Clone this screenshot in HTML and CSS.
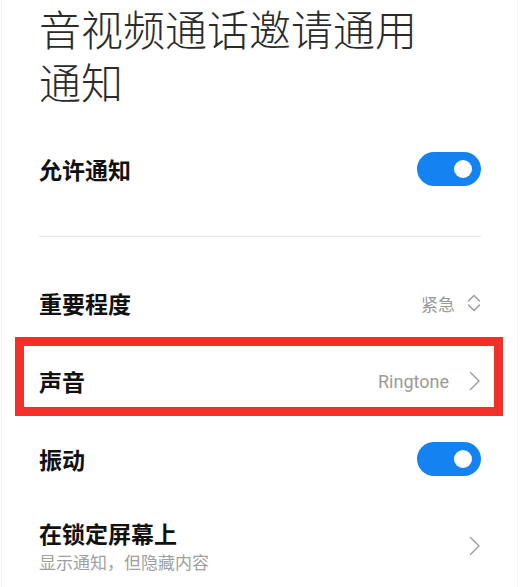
FILE: index.html
```html
<!DOCTYPE html>
<html lang="zh-CN">
<head>
    <meta charset="UTF-8">
    <meta name="viewport" content="width=device-width, initial-scale=1.0">
    <title>音视频通话邀请通用通知</title>
    <link rel="stylesheet" href="styles.css">
</head>
<body>
    <div class="page">
        <h1 class="page-title">音视频通话邀请通用<br>通知</h1>

        <div class="row">
            <span class="row-label">允许通知</span>
            <span class="switch on"><span class="knob"></span></span>
        </div>

        <div class="divider"></div>

        <div class="row">
            <span class="row-label">重要程度</span>
            <span class="row-value">
                紧急
                <svg class="updown" width="14" height="18" viewBox="0 0 14 18">
                    <polyline points="1.5,7 7,1.5 12.5,7" />
                    <polyline points="1.5,11 7,16.5 12.5,11" />
                </svg>
            </span>
        </div>

        <div class="row highlight">
            <span class="row-label">声音</span>
            <span class="row-value">
                <span class="latin">Ringtone</span>
                <svg class="chevron" width="12" height="20" viewBox="0 0 12 20">
                    <polyline points="1.5,1.5 10,10 1.5,18.5" />
                </svg>
            </span>
        </div>

        <div class="row">
            <span class="row-label">振动</span>
            <span class="switch on"><span class="knob"></span></span>
        </div>

        <div class="row tall">
            <div class="row-text">
                <span class="row-label">在锁定屏幕上</span>
                <span class="row-sub">显示通知，但隐藏内容</span>
            </div>
            <span class="row-value">
                <svg class="chevron" width="12" height="20" viewBox="0 0 12 20">
                    <polyline points="1.5,1.5 10,10 1.5,18.5" />
                </svg>
            </span>
        </div>
    </div>
</body>
</html>
```

FILE: styles.css
```css
* {
    box-sizing: border-box;
    margin: 0;
    padding: 0;
}

body {
    background: white;
    color: #111;
    font-family: "Noto Sans CJK SC", "Noto Sans", sans-serif;
}

.page {
    margin: 0 2px 0 1px;
    min-height: 587px;
    padding: 0 36px 0 37px;
    border-left: 1px solid #f3f3f3;
    border-right: 1px solid #f3f3f3;
}

.page-title {
    font-size: 42px;
    line-height: 53px;
    font-weight: 300;
    color: #2b2b2b;
    padding-top: 1px;
    margin-bottom: 23px;
    white-space: nowrap;
}

.row {
    height: 78px;
    display: flex;
    align-items: center;
    justify-content: space-between;
}

.row.tall {
    height: 96px;
}

.row-text {
    display: flex;
    flex-direction: column;
}

.row-label {
    font-size: 23px;
    font-weight: 700;
    color: #111;
    line-height: 30px;
}

.row-sub {
    font-size: 17px;
    color: #a0a0a0;
    line-height: 24px;
    margin-top: 2px;
}

.row-value {
    display: flex;
    align-items: center;
    gap: 12px;
    font-size: 17px;
    color: #9a9a9a;
}

.latin {
    font-family: Roboto, "Noto Sans", sans-serif;
    font-size: 18px;
    margin-right: 8px;
}

.updown polyline,
.chevron polyline {
    fill: none;
    stroke: #9a9a9a;
    stroke-width: 1.4;
    stroke-linecap: round;
    stroke-linejoin: round;
}

.switch {
    width: 64px;
    height: 34px;
    border-radius: 17px;
    background: #1482f0;
    display: flex;
    align-items: center;
    justify-content: flex-end;
    padding-right: 9px;
}

.knob {
    width: 18px;
    height: 18px;
    border-radius: 50%;
    background: white;
}

.divider {
    height: 1px;
    background: #e6e6e6;
    margin: 28px 0 27px;
}

.highlight {
    position: relative;
}

.highlight::after {
    content: "";
    position: absolute;
    top: -5px;
    bottom: 4px;
    left: -24px;
    right: -22px;
    border: 9px solid #f2302b;
}
```
